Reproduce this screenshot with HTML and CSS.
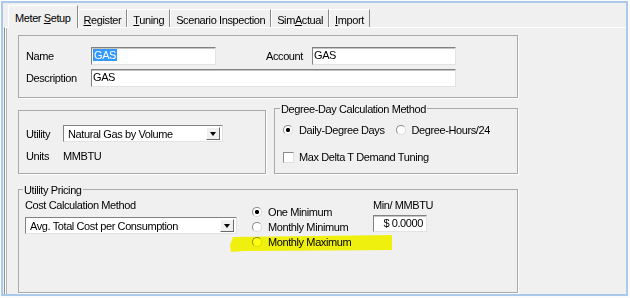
FILE: index.html
```html
<!DOCTYPE html>
<html lang="en">
<head>
  <meta charset="UTF-8">
  <title>Meter Setup</title>
  <link rel="stylesheet" href="styles.css">
</head>
<body>

<div class="window">
  <div class="tabs">
    <div class="tab active">Meter <u>S</u>etup</div>
    <div class="tab"><u>R</u>egister</div>
    <div class="tab"><u>T</u>uning</div>
    <div class="tab">Scenario Inspection</div>
    <div class="tab">Sim<u>A</u>ctual</div>
    <div class="tab"><u>I</u>mport</div>
  </div>

  <div class="page">
    <fieldset class="group ident">
      <div class="line">
        <span class="lbl wide">Name</span>
        <span class="field name-field"><span class="selected">GAS</span></span>
        <span class="lbl account-lbl">Account</span>
        <span class="field account-field">GAS</span>
      </div>
      <div class="line">
        <span class="lbl wide">Description</span>
        <span class="field desc-field">GAS</span>
      </div>
    </fieldset>

    <div class="pair">
      <fieldset class="group utility">
        <div class="line">
          <span class="lbl short">Utility</span>
          <span class="combo utility-combo"><span class="combo-text">Natural Gas by Volume</span><span class="drop"></span></span>
        </div>
        <div class="line units">
          <span class="lbl short">Units</span>
          <span>MMBTU</span>
        </div>
      </fieldset>

      <fieldset class="group degree">
        <legend>Degree-Day Calculation Method</legend>
        <div class="line opt-line">
          <span class="opt first"><span class="radio on"></span>Daily-Degree Days</span>
          <span class="opt"><span class="radio"></span>Degree-Hours/24</span>
        </div>
        <div class="line opt-line check-line">
          <span class="opt"><span class="check"></span>Max Delta T Demand Tuning</span>
        </div>
      </fieldset>
    </div>

    <fieldset class="group pricing">
      <legend>Utility Pricing</legend>
      <div class="pricing-body">
        <div class="method">
          <div class="cap">Cost Calculation Method</div>
          <span class="combo method-combo"><span class="combo-text">Avg. Total Cost per Consumption</span><span class="drop"></span></span>
        </div>
        <div class="limits">
          <div class="opt row"><span class="radio on"></span>One Minimum</div>
          <div class="opt row"><span class="radio"></span>Monthly Minimum</div>
          <div class="opt row marked"><span class="radio"></span>Monthly Maximum<span class="marker"></span></div>
        </div>
        <div class="rate">
          <div class="cap">Min/ MMBTU</div>
          <span class="field rate-field">$ 0.0000</span>
        </div>
      </div>
    </fieldset>
  </div>
</div>

</body>
</html>
```

FILE: styles.css
```css
* {
  box-sizing: border-box;
}

body {
  margin: 0;
  background-color: #fbfbfb;
  font-family: "Liberation Sans", Arial, sans-serif;
  font-size: 11px;
  letter-spacing: -0.4px;
  color: #000;
}

.window {
  margin: 1px 0 0 1px;
  width: 627px;
  height: 295px;
  border: 2px solid #abc9ea;
  background-color: #f0f0f0;
  display: flex;
  flex-direction: column;
  overflow: hidden;
}

/* tab strip */
.tabs {
  display: flex;
  align-items: flex-end;
  height: 24px;
  padding-left: 5px;
  flex: none;
}

.tab {
  height: 18px;
  padding: 3px 5px 0;
  line-height: 14px;
  white-space: nowrap;
  border-top: 1px solid #fff;
  border-left: 1px solid #fff;
  border-right: 1px solid #8a8a8a;
}

.tab.active {
  height: 23px;
  padding: 2px 6px 0;
  line-height: 20px;
  margin-bottom: -1px;
  position: relative;
  z-index: 1;
  background-color: #f0f0f0;
}

.page {
  flex: 1;
  margin-left: 1px;
  border-left: 1px solid #8e8e8e;
  border-top: 1px solid #fff;
  box-shadow: inset 1px 0 0 #fff, inset 2px 0 0 #b5b5b5;
  padding: 7px 0 0 13px;
}

/* group boxes */
.group {
  margin: 0;
  min-width: 0;
  border: 1px solid #a9a9a9;
  box-shadow: 1px 1px 0 #fff;
}

.group legend {
  padding: 3px 1px 0;
  line-height: 13px;
}

.line {
  display: flex;
  align-items: center;
}

.lbl {
  flex: none;
}

.wide {
  width: 65px;
}

.short {
  width: 37px;
}

.field {
  display: block;
  height: 18px;
  padding-left: 1px;
  line-height: 15px;
  background-color: #fff;
  border: 1px solid;
  border-color: #828282 #e3e3e3 #e3e3e3 #828282;
  box-shadow: inset 0 1px 0 #c4c4c4;
  white-space: nowrap;
}

.selected {
  background-color: #3399ff;
  color: #fff;
  padding: 0 1px;
}

.ident {
  width: 500px;
  height: 63px;
  padding: 11px 0 0 7px;
}

.ident .line + .line {
  margin-top: 4px;
}

.name-field {
  width: 125px;
}

.account-lbl {
  width: 46px;
  margin-left: 50px;
}

.account-field {
  width: 144px;
}

.desc-field {
  width: 365px;
}

/* combos */
.combo {
  display: flex;
  align-items: center;
  height: 17px;
  padding: 1px 2px 1px 1px;
  background-color: #fff;
  border: 1px solid;
  border-color: #828282 #e3e3e3 #e3e3e3 #828282;
  white-space: nowrap;
}

.combo-text {
  flex: 1;
  padding-left: 3px;
}

.drop {
  width: 14px;
  height: 13px;
  background-color: #f0f0f0;
  border: 1px solid;
  border-color: #fff #6a6a6a #6a6a6a #fff;
  display: flex;
  align-items: center;
  justify-content: center;
}

.drop::after {
  content: "";
  border-left: 3.5px solid transparent;
  border-right: 3.5px solid transparent;
  border-top: 4px solid #000;
}

.utility-combo {
  width: 160px;
}

.method-combo {
  width: 212px;
}

/* utility + degree-day row */
.pair {
  display: flex;
  align-items: flex-end;
  gap: 8px;
  margin-top: 2px;
}

.utility {
  width: 248px;
  height: 64px;
  padding: 14px 0 0 7px;
}

.units {
  margin-top: 8px;
  line-height: 13px;
}

.degree {
  width: 244px;
  height: 74px;
  padding: 7px 0 0 8px;
}

.degree legend {
  margin-left: -3px;
}

.opt-line {
  height: 14px;
}

.check-line {
  margin-top: 13px;
}

.opt {
  display: flex;
  align-items: center;
  white-space: nowrap;
}

.opt.first {
  margin-right: 11px;
}

.radio {
  flex: none;
  width: 10px;
  height: 10px;
  margin-right: 6px;
  border-radius: 50%;
  background-color: #fff;
  border: 1px solid;
  border-color: #8a8a8a #dcdcdc #dcdcdc #8a8a8a;
}

.radio.on {
  background: radial-gradient(circle, #000 0 1.8px, #fff 2.4px);
}

.check {
  flex: none;
  width: 11px;
  height: 11px;
  margin-right: 5px;
  background-color: #fff;
  border: 1px solid;
  border-color: #8a8a8a #e0e0e0 #e0e0e0 #8a8a8a;
}

/* pricing */
.pricing {
  width: 500px;
  height: 112px;
  margin-top: 7px;
  padding: 2px 0 0 6px;
}

.pricing legend {
  margin-left: -2px;
}

.pricing-body {
  display: flex;
  align-items: flex-start;
}

.cap {
  line-height: 13px;
  white-space: nowrap;
}

.method .cap {
  margin-bottom: 5px;
}

.limits {
  width: 121px;
  margin: 5px 0 0 15px;
}

.row {
  height: 15px;
}

.marked {
  position: relative;
}

.marker {
  position: absolute;
  left: -22px;
  top: 1px;
  width: 162px;
  height: 17px;
  background-color: #ffff10;
  mix-blend-mode: multiply;
  clip-path: polygon(3px 2px, 162px 0, 162px 15px, 14px 16px, 1px 17px, 0 10px);
}

.rate .cap {
  margin-bottom: 3px;
}

.rate-field {
  width: 54px;
  height: 17px;
  text-align: right;
  padding-right: 3px;
}
```
